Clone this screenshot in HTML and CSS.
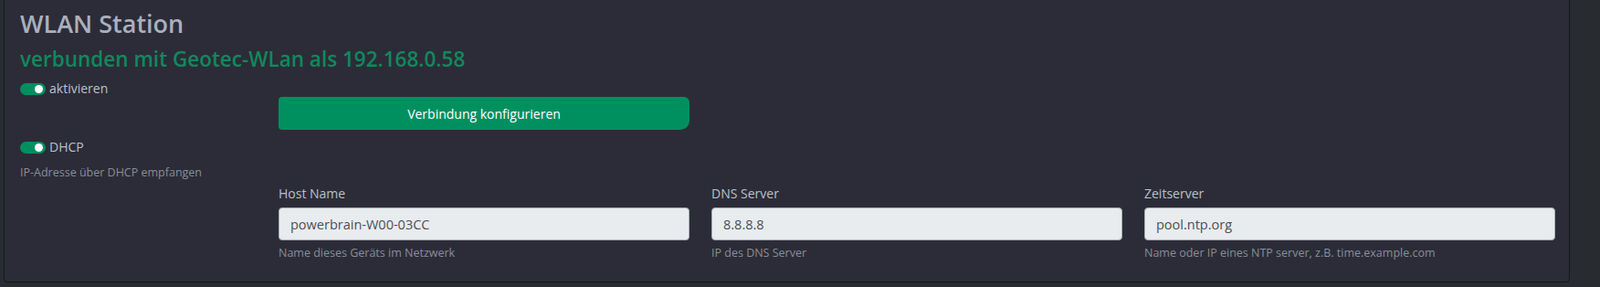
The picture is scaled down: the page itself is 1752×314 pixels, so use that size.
FILE: index.html
```html
<!DOCTYPE html>
<html lang="de">
<head>
  <meta charset="UTF-8">
  <meta name="viewport" content="width=device-width, initial-scale=1.0">
  <title>WLAN Station</title>
  <link rel="stylesheet" href="styles.css">
</head>
<body>

  <section class="card">
    <h2 class="card-title">WLAN Station</h2>
    <h3 class="status">verbunden mit Geotec-WLan als 192.168.0.58</h3>

    <!-- Aktivieren + Konfiguration -->
    <div class="row row-enable">
      <div class="side">
        <label class="switch">
          <input type="checkbox" checked>
          <span class="slider"></span>
          aktivieren
        </label>
      </div>
      <div class="main">
        <button class="button">Verbindung konfigurieren</button>
      </div>
    </div>

    <!-- DHCP -->
    <div class="row row-dhcp">
      <div class="side">
        <label class="switch">
          <input type="checkbox" checked>
          <span class="slider"></span>
          DHCP
        </label>
        <div class="help">IP-Adresse über DHCP empfangen</div>
      </div>
    </div>

    <!-- Netzwerk Felder -->
    <div class="row row-fields">
      <div class="side"></div>
      <div class="field">
        <label for="hostname">Host Name</label>
        <input type="text" id="hostname" value="powerbrain-W00-03CC" readonly>
        <div class="help">Name dieses Geräts im Netzwerk</div>
      </div>
      <div class="field">
        <label for="dns">DNS Server</label>
        <input type="text" id="dns" value="8.8.8.8" readonly>
        <div class="help">IP des DNS Server</div>
      </div>
      <div class="field">
        <label for="ntp">Zeitserver</label>
        <input type="text" id="ntp" value="pool.ntp.org" readonly>
        <div class="help">Name oder IP eines NTP server, z.B. time.example.com</div>
      </div>
    </div>
  </section>

</body>
</html>
```

FILE: styles.css
```css
/* Variables */
:root {
  --page-bg: #282b30;
  --card-bg: #2c2c38;
  --card-border: #17171c;
  --title-color: #a9b0bd;
  --text-color: #b9c0cc;
  --muted-color: #878e99;
  --green: #009060;
  --green-text: #11885d;
  --input-bg: #e9ecef;
  --input-border: #a7adb5;
  --input-text: #4a5059;
}

/* General */
body {
  margin: 0;
  background-color: var(--page-bg);
  font-family: 'Open Sans', 'Noto Sans', sans-serif;
  color: var(--text-color);
  height: 314px;
  overflow: hidden;
}

.card {
  margin: -10px 0 0 4px;
  width: 1715px;
  box-sizing: border-box;
  height: 319px;
  padding: 18px 15px 0 17px;
  background-color: var(--card-bg);
  border: 1px solid var(--card-border);
  border-radius: 4px;
}

.card-title {
  margin: 0;
  font-size: 27px;
  font-weight: 600;
  line-height: 34px;
  color: var(--title-color);
}

.status {
  margin: 8px 0 0;
  font-size: 22.5px;
  font-weight: 600;
  line-height: 28px;
  color: var(--green-text);
}

/* Grid rows */
.row {
  display: grid;
  grid-template-columns: 259px 1fr 1fr 1fr;
  column-gap: 24px;
}

.row-enable {
  margin-top: 8px;
}

.row-enable .main {
  grid-column: 2 / 3;
  padding-top: 19px;
}

.row-dhcp {
  margin-top: 9px;
}

.row-fields {
  margin-top: 5px;
}

/* Switch */
.switch {
  display: flex;
  align-items: center;
  gap: 4px;
  font-size: 14px;
  line-height: 20px;
  color: var(--text-color);
}

.switch input {
  display: none;
}

.slider {
  position: relative;
  width: 28px;
  height: 13px;
  border-radius: 7px;
  background-color: var(--green);
}

.slider::after {
  content: '';
  position: absolute;
  right: 3px;
  top: 2px;
  width: 9px;
  height: 9px;
  border-radius: 50%;
  background-color: #fff;
}

.help {
  font-size: 12.5px;
  line-height: 17px;
  color: var(--muted-color);
}

.row-dhcp .help {
  margin-top: 9px;
}

/* Button */
.button {
  display: block;
  width: 100%;
  height: 36px;
  border: none;
  border-radius: 4px 6px 10px 4px;
  background-color: var(--green);
  color: #fff;
  font-family: inherit;
  font-size: 14px;
  cursor: pointer;
}

/* Fields */
.field label {
  display: block;
  font-size: 14px;
  line-height: 20px;
  margin-bottom: 5px;
  color: var(--text-color);
}

.field input {
  display: block;
  width: 100%;
  box-sizing: border-box;
  height: 36px;
  padding: 0 12px;
  border: 1px solid var(--input-border);
  border-radius: 4px;
  background-color: var(--input-bg);
  color: var(--input-text);
  font-family: inherit;
  font-size: 14.5px;
}

.field .help {
  margin-top: 5px;
}
```
